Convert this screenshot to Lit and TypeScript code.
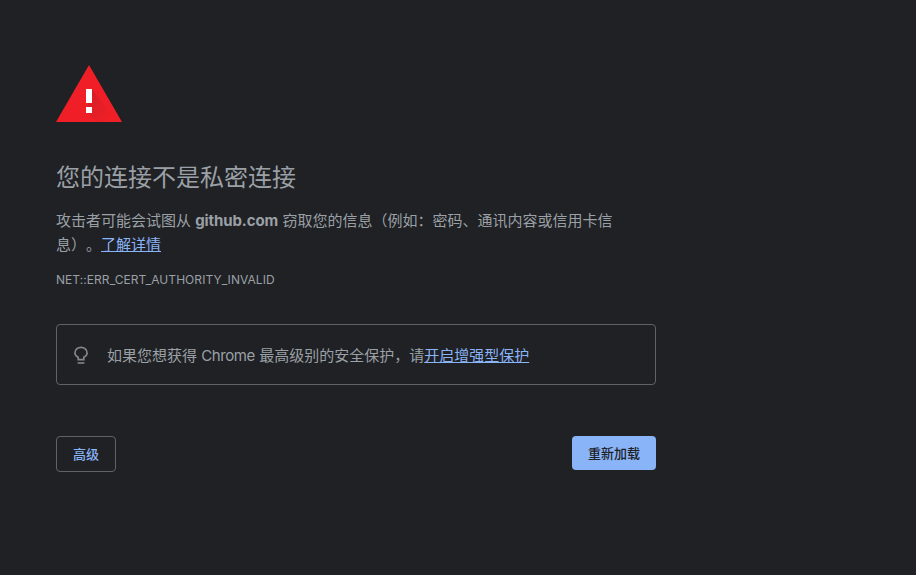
import { LitElement, html, css } from "lit";
import { customElement } from "lit/decorators.js";

@customElement("app-root")
export class AppRoot extends LitElement {
  static styles = css`
    :host {
      display: block;
      width: 916px;
      height: 575px;
      background: #202124;
      overflow: hidden;
      font-family: Inter, "Noto Sans CJK SC", sans-serif;
      color: #9aa0a6;
      text-spacing-trim: space-all;
    }
    .page {
      width: 600px;
      padding: 65px 0 0 56px;
      display: flex;
      flex-direction: column;
    }
    .icon { display: block; width: 66px; height: 57px; }
    h1 {
      margin: 38px 0 0;
      font-size: 24px;
      line-height: 36px;
      font-weight: 400;
      color: #9aa0a6;
    }
    .desc {
      margin: 13px 0 0;
      width: 560px;
      font-size: 15px;
      line-height: 24px;
      color: #9aa0a6;
    }
    .desc b { font-weight: 700; letter-spacing: -0.1px; }
    a { color: #8ab4f8; text-decoration: underline; }
    .code {
      margin-top: 15px;
      font-size: 12px;
      line-height: 16px;
      letter-spacing: 0.06px;
      color: #9aa0a6;
    }
    .tip {
      margin-top: 36px;
      box-sizing: border-box;
      height: 61px;
      border: 1px solid #5f6368;
      border-radius: 4px;
      display: flex;
      align-items: center;
      gap: 17px;
      padding-left: 16px;
      font-size: 15px;
    }
    .latin { letter-spacing: -0.4px; }
    .bulb { width: 17px; height: 20px; flex: none; }
    .actions {
      margin-top: 51px;
      display: flex;
      justify-content: space-between;
      align-items: flex-start;
    }
    button {
      font-family: inherit;
      font-size: 13px;
      font-weight: 500;
      border-radius: 4px;
      padding: 0 0 2px;
      box-sizing: border-box;
    }
    .adv {
      width: 60px;
      height: 36px;
      background: transparent;
      border: 1px solid #5f6368;
      color: #8ab4f8;
    }
    .reload {
      width: 84px;
      height: 34px;
      background: #8ab4f8;
      border: none;
      color: #202124;
    }
  `;

  render() {
    return html`
      <div class="page">
        <svg class="icon" viewBox="0 0 66 57" aria-hidden="true">
          <defs>
            <linearGradient id="shade" x1="0.1" y1="0.1" x2="0.85" y2="0.85">
              <stop offset="0" stop-color="#d41d25"></stop>
              <stop offset="1" stop-color="#f01f27"></stop>
            </linearGradient>
          </defs>
          <polygon points="33,0 66,57 0,57" fill="#f01f27"></polygon>
          <polygon points="36,24 60,57 41,57 30,47" fill="url(#shade)"></polygon>
          <rect x="30" y="24" width="6" height="14" fill="#fff"></rect>
          <rect x="30" y="42" width="6" height="6" fill="#fff"></rect>
        </svg>
        <h1>您的连接不是私密连接</h1>
        <p class="desc">攻击者可能会试图从 <b>github.com</b> 窃取您的信息（例如：密码、通讯内容或信用卡信息）。<a href="#">了解详情</a></p>
        <div class="code">NET::ERR_CERT_AUTHORITY_INVALID</div>
        <div class="tip">
          <svg class="bulb" viewBox="0 0 17 20" aria-hidden="true" fill="none" stroke="#80868b" stroke-width="1.7">
            <path d="M5.200 14.600v-2.400C3.100 11.100 1.900 9.900 1.900 8.200 1.900 4.800 4.600 2.300 8 2.300s6.100 2.500 6.100 5.900c0 1.700-1.200 2.900-3.300 4v2.400z"></path>
            <path d="M4.600 18h6.800" stroke-width="1.600"></path>
          </svg>
          <span>如果您想获得 <span class="latin">Chrome</span> 最高级别的安全保护，请<a href="#">开启增强型保护</a></span>
        </div>
        <div class="actions">
          <button class="adv">高级</button>
          <button class="reload">重新加载</button>
        </div>
      </div>
    `;
  }
}
